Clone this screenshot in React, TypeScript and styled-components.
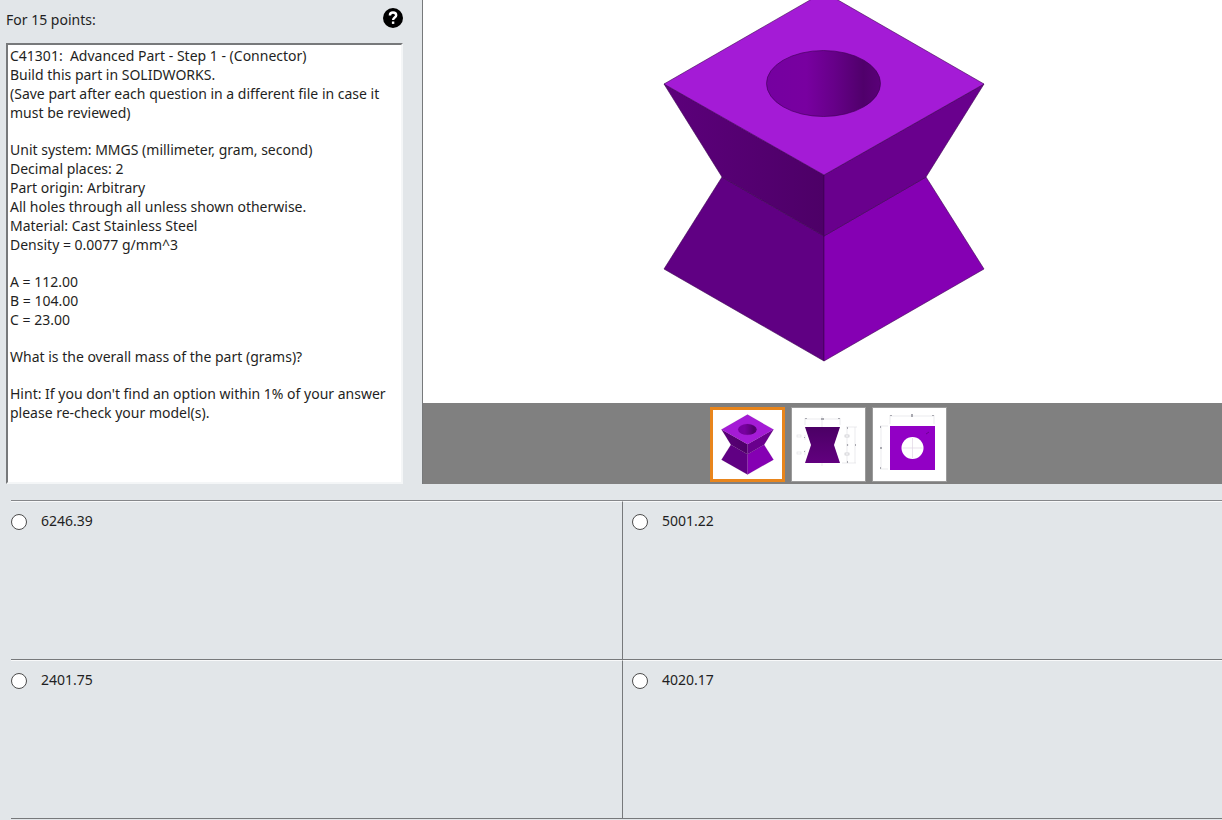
import React, { useState } from "react";
import styled, { createGlobalStyle } from "styled-components";

const GlobalStyle = createGlobalStyle`
  *, *::before, *::after { box-sizing: border-box; }
  body {
    margin: 0;
    background: #e2e6e9;
    color: #1f1f23;
    font: 14px/19px "Noto Sans", "Segoe UI", sans-serif;
  }
`;

const Page = styled.main`
  min-height: 100vh;
  overflow: hidden;
  background: #e2e6e9;
`;

const TopArea = styled.div`
  display: grid;
  grid-template-columns: 422px minmax(0, 1fr);
  min-height: 484px;
`;

const QuestionPane = styled.section`
  display: flex;
  flex-direction: column;
  padding: 8px 19px 0 6px;
`;

const QuestionHeader = styled.header`
  display: flex;
  justify-content: space-between;
  height: 35px;
`;

const Points = styled.h1`
  margin: 0;
  padding-top: 2px;
  font-size: 14px;
  font-weight: 400;
`;

const HelpButton = styled.button`
  display: block;
  width: 20px;
  height: 20px;
  margin: 0;
  padding: 0;
  border: 0;
  background: none;
  cursor: pointer;

  svg { display: block; }
`;

const QuestionBox = styled.div`
  flex: 1;
  display: flex;
  flex-direction: column;
  gap: 18px;
  padding: 1px 0 1px 2px;
  background: #fff;
  border: 2px solid;
  border-color: #77797b #f4f6f7 #f4f6f7 #77797b;
  white-space: pre;
`;

const Paragraph = styled.p`
  margin: 0;
`;

const Viewer = styled.section`
  display: flex;
  flex-direction: column;
  min-width: 0;
  border-left: 1px solid #77797b;
  background: #fff;
`;

const Stage = styled.div`
  flex: 1;
  display: flex;
  justify-content: center;
  padding-left: 2px;

  svg { display: block; }
`;

const ThumbBar = styled.div`
  display: flex;
  justify-content: center;
  align-items: center;
  gap: 6px;
  height: 81px;
  padding: 1px 0 0 11px;
  background: #808080;
`;

const Thumb = styled.button<{ $active: boolean }>`
  width: 75px;
  height: 75px;
  margin: 0;
  padding: ${(p) => (p.$active ? 0 : 2)}px;
  border: ${(p) => (p.$active ? "3px solid #e8851c" : "1px solid #9b9b9b")};
  background: #fff;
  cursor: pointer;

  svg { display: block; width: 100%; height: 100%; }
`;

const Answers = styled.fieldset`
  display: grid;
  grid-template-columns: 1fr 1fr;
  min-width: 0;
  margin: 16px -11px 0 11px;
  padding: 0;
  border: 0;
  border-top: 1px solid #85878a;
`;

const Answer = styled.label`
  display: flex;
  align-items: flex-start;
  min-height: 159px;
  padding-top: 9px;
  border-top: 1px solid #f8f9fa;
  border-bottom: 1px solid #77797b;
  cursor: pointer;

  &:nth-of-type(even) {
    padding-left: 9px;
    border-left: 1px solid #77797b;
  }
`;

const Radio = styled.input`
  appearance: none;
  flex: none;
  width: 16px;
  height: 16px;
  margin: 3px 14px 0 0;
  border: 1px solid #4c4c4c;
  border-radius: 50%;
  background: #fff;

  &:checked { box-shadow: inset 0 0 0 3px #fff; background: #222; }
`;

function Connector({ id }: { id: string }) {
  return (
    <>
      <defs>
        <linearGradient id={id} x1="0" x2="1" y1="0" y2="0">
          <stop offset="0" stopColor="#7500a0" />
          <stop offset="0.35" stopColor="#7800a0" />
          <stop offset="0.6" stopColor="#660088" />
          <stop offset="0.85" stopColor="#50006b" />
          <stop offset="1" stopColor="#5a0078" />
        </linearGradient>
        <linearGradient id={`${id}-side`} x1="0" x2="1" y1="0" y2="0">
          <stop offset="0" stopColor="#5c007b" />
          <stop offset="1" stopColor="#4d0067" />
        </linearGradient>
      </defs>
      <g stroke="#3d0052" strokeWidth="0.6" strokeLinejoin="round">
        <path d="M722 177 824 236V361L664 269Z" fill="#600083" />
        <path d="M926 177 824 236V361L984 269Z" fill="#8500b3" />
        <path d="M664 84 824 175V236L722 177Z" fill={`url(#${id}-side)`} />
        <path d="M984 84 824 175V236L926 177Z" fill="#69008d" />
        <path d="M664 84 824-8 984 84 824 175Z" fill="#a41bd6" />
        <ellipse cx="823.5" cy="83.5" rx="57" ry="33" fill={`url(#${id})`} />
      </g>
    </>
  );
}

function IsoThumb() {
  return (
    <svg viewBox="612 -36 424 424" aria-hidden="true">
      <Connector id="bore-thumb" />
    </svg>
  );
}

function FrontThumb() {
  return (
    <svg viewBox="0 0 69 69" aria-hidden="true">
      <defs>
        <linearGradient id="front" x1="0" x2="0" y1="0" y2="1">
          <stop offset="0" stopColor="#4b0065" />
          <stop offset="1" stopColor="#62007f" />
        </linearGradient>
      </defs>
      <g stroke="#dedee2" strokeWidth="0.6" fill="none">
        <path d="M11 9H46M11 8v7M46 8v7M52 17h11M52 35h3M48 53h14M53 17v36M61 17v36" />
        <path d="M28 6v50" />
        <rect x="3" y="25" width="4" height="2" />
        <rect x="3" y="42" width="4" height="2" />
        <path d="M11 25v5M11 40v5" />
      </g>
      <g fill="#a9a9b0">
        <path d="M11 8h2v1h-2zM27 8h3v2h-3zM44 8h2v1h-2zM10 27h1v1h-1zM10 41h1v1h-1z" />
        <path d="M53 17h1v2h-1zM53 34h1v2h-1zM53 51h1v2h-1zM61 34h1v2h-1z" />
      </g>
      <g stroke="#bcbcc2" strokeWidth="0.6" fill="#fff">
        <rect x="51" y="25" width="4" height="2" />
        <rect x="51" y="43" width="4" height="2" />
      </g>
      <path d="M11 17H46L40 35 46 53H11L17 35Z" fill="url(#front)" />
    </svg>
  );
}

function TopThumb() {
  return (
    <svg viewBox="0 0 69 69" aria-hidden="true">
      <g stroke="#dedee2" strokeWidth="0.6" fill="none">
        <path d="M15 6H59M15 5v9M59 5v9M6 16v43M5 16h8M5 59h8" />
      </g>
      <g fill="#a9a9b0">
        <path d="M15 5h2v1h-2zM36 4h2v3h-2zM57 5h2v1h-2zM5 16h1v2h-1zM5 37h2v2h-2zM5 57h1v2h-1z" />
      </g>
      <rect x="15" y="16" width="45" height="44" fill="#9200c5" />
      <circle cx="37.5" cy="38" r="11" fill="#fff" />
      <path d="M37.500 28v20M27.500 38h20" stroke="#e0d6e4" strokeWidth="0.7" />
      <path d="M51 24l3-2" stroke="#6b0091" strokeWidth="1" />
    </svg>
  );
}

const thumbs = [
  { name: "Isometric view", Picture: IsoThumb },
  { name: "Front view", Picture: FrontThumb },
  { name: "Top view", Picture: TopThumb },
];

const paragraphs = [
  "C41301:  Advanced Part - Step 1 - (Connector)\nBuild this part in SOLIDWORKS.\n(Save part after each question in a different file in case it\nmust be reviewed)",
  "Unit system: MMGS (millimeter, gram, second)\nDecimal places: 2\nPart origin: Arbitrary\nAll holes through all unless shown otherwise.\nMaterial: Cast Stainless Steel\nDensity = 0.0077 g/mm^3",
  "A = 112.00\nB = 104.00\nC = 23.00",
  "What is the overall mass of the part (grams)?",
  "Hint: If you don't find an option within 1% of your answer\nplease re-check your model(s).",
];

const options = ["6246.39", "5001.22", "2401.75", "4020.17"];

export default function App() {
  const [view, setView] = useState(0);
  const [answer, setAnswer] = useState("");

  return (
    <>
      <GlobalStyle />
      <Page>
        <TopArea>
          <QuestionPane>
            <QuestionHeader>
              <Points>For 15 points:</Points>
              <HelpButton type="button" aria-label="Help">
                <svg width="20" height="20" viewBox="0 0 20 20">
                  <circle cx="10" cy="10" r="10" fill="#000" />
                  <path
                    d="M6.900 7.500C6.900 5.400 8.200 4.500 10 4.500s3.200 1 3.200 2.700c0 2.300-3.100 2.200-3.100 4.700"
                    fill="none"
                    stroke="#fff"
                    strokeWidth="2.400"
                  />
                  <rect x="8.900" y="13.500" width="2.400" height="2.400" fill="#fff" />
                </svg>
              </HelpButton>
            </QuestionHeader>
            <QuestionBox>
              {paragraphs.map((text) => (
                <Paragraph key={text}>{text}</Paragraph>
              ))}
            </QuestionBox>
          </QuestionPane>
          <Viewer>
            <Stage>
              <svg width="322" height="403" viewBox="663 0 322 403" role="img" aria-label="Connector">
                <Connector id="bore" />
              </svg>
            </Stage>
            <ThumbBar>
              {thumbs.map(({ name, Picture }, i) => (
                <Thumb
                  key={name}
                  type="button"
                  aria-label={name}
                  $active={view === i}
                  onClick={() => setView(i)}
                >
                  <Picture />
                </Thumb>
              ))}
            </ThumbBar>
          </Viewer>
        </TopArea>
        <Answers aria-label="Answers">
          {options.map((value) => (
            <Answer key={value}>
              <Radio
                type="radio"
                name="answer"
                value={value}
                checked={answer === value}
                onChange={() => setAnswer(value)}
              />
              {value}
            </Answer>
          ))}
        </Answers>
      </Page>
    </>
  );
}
